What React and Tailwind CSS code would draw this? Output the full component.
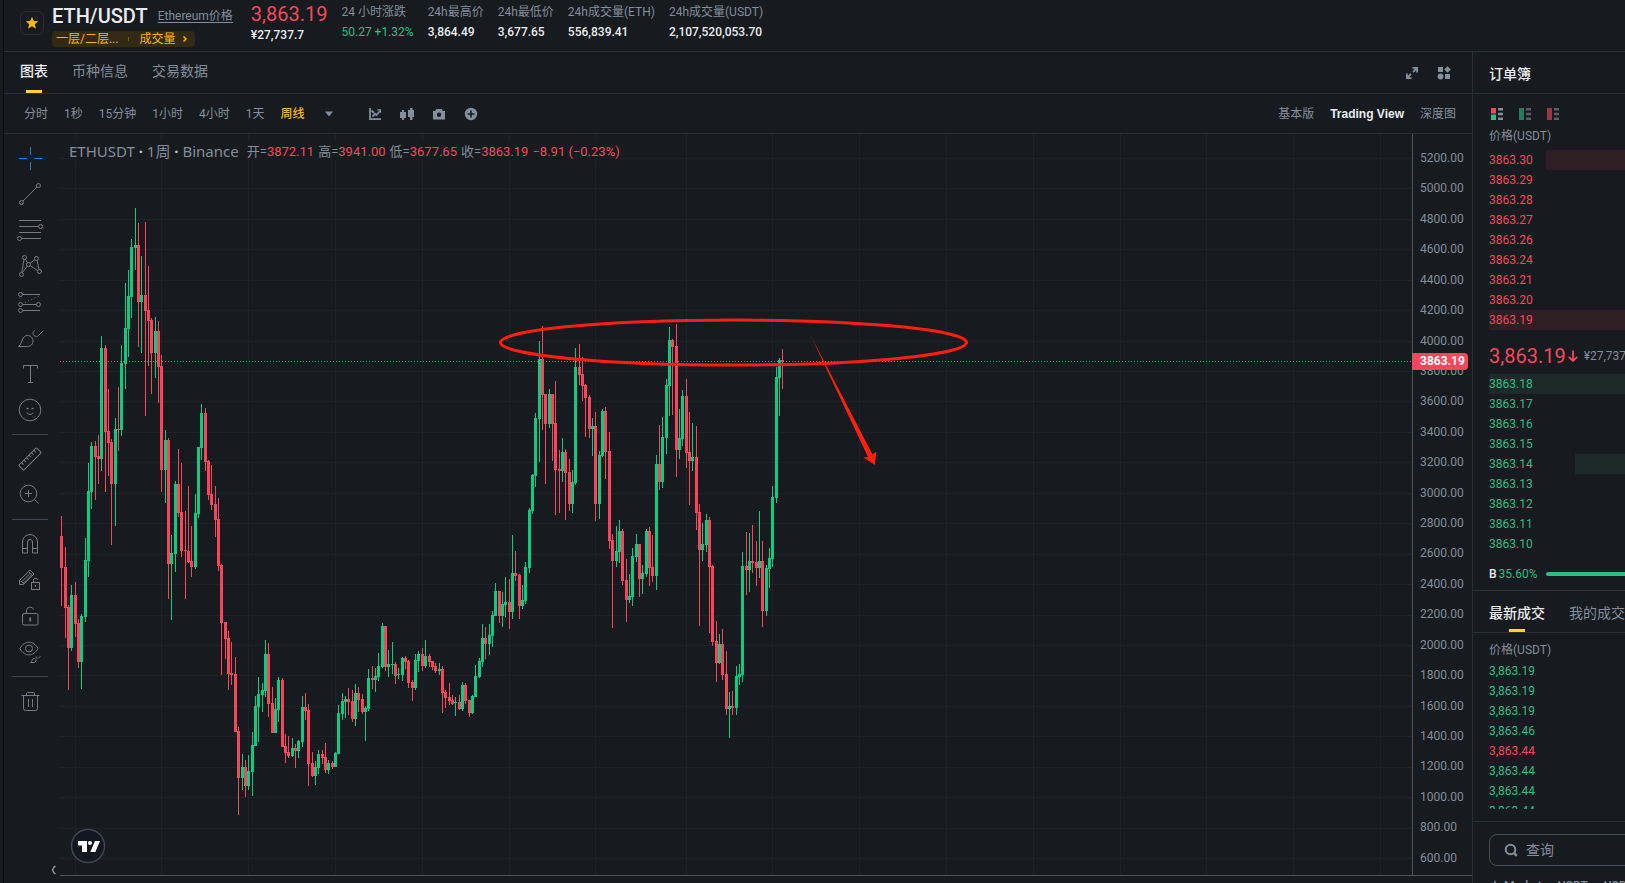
// src/App.jsx
import React, { useState } from 'react';

const STATS = [
  { label: '24 小时涨跌', value: '50.27 +1.32%', up: true },
  { label: '24h最高价', value: '3,864.49' },
  { label: '24h最低价', value: '3,677.65' },
  { label: '24h成交量(ETH)', value: '556,839.41' },
  { label: '24h成交量(USDT)', value: '2,107,520,053.70' },
];

const TABS = ['图表', '币种信息', '交易数据'];
const INTERVALS = ['分时', '1秒', '15分钟', '1小时', '4小时', '1天', '周线'];
const VIEWS = ['基本版', 'Trading View', '深度图'];

const ASKS = ['3863.30', '3863.29', '3863.28', '3863.27', '3863.26', '3863.24', '3863.21', '3863.20', '3863.19'];
const BIDS = ['3863.18', '3863.17', '3863.16', '3863.15', '3863.14', '3863.13', '3863.12', '3863.11', '3863.10'];
// share of the row that is filled, in percent
const DEPTH = { '3863.30': 58, '3863.19': 100, '3863.18': 100, '3863.14': 37 };

const TRADES = [
  ['3,863.19', 'up'],
  ['3,863.19', 'up'],
  ['3,863.19', 'up'],
  ['3,863.46', 'up'],
  ['3,863.44', 'down'],
  ['3,863.44', 'up'],
  ['3,863.44', 'up'],
  ['3,863.44', 'up'],
];

const PRICES = Array.from({ length: 24 }, (_, i) => (5200 - i * 200).toFixed(2));
const GRID_X = [75, 161, 248, 335, 422, 509, 595, 686, 772, 859, 946, 1033, 1120, 1206, 1293, 1380];

// x, high, body top, body bottom, low, u(p) / d(own)
const CANDLES = `
61 516 536 568 606 d|65 547 567 608 638 d|68 605 607 648 690 d|71 585 595 648 651 u|75 582 595 624 637 d
78 619 623 662 668 d|81 614 616 662 689 u|85 538 560 617 622 u|88 463 491 561 577 u|91 442 446 492 509 u
95 441 446 457 500 d|98 435 456 459 484 d|101 336 348 459 471 u|105 345 348 432 492 d|108 389 431 443 476 d
111 439 442 484 545 d|115 418 429 484 526 u|118 387 429 430 451 d|121 345 363 430 436 u|125 283 328 364 389 u
128 270 296 329 357 u|131 239 247 297 318 u|135 208 245 248 270 u|138 223 245 302 347 d|141 256 295 302 353 u
145 222 295 311 416 d|148 266 310 321 366 d|151 318 320 353 394 d|155 317 331 353 378 u|158 321 331 367 403 d
161 355 366 470 492 d|165 430 440 470 503 u|168 438 440 564 599 d|171 535 553 564 620 u|175 481 484 554 572 u
178 449 484 513 517 d|181 463 512 551 557 d|185 511 550 551 599 d|188 486 551 562 563 d|191 526 561 567 577 d
195 494 513 567 569 u|198 447 447 514 518 u|201 404 413 448 460 u|205 408 413 462 471 d|208 460 461 495 500 d
211 465 494 505 510 d|215 486 504 520 537 d|218 498 519 566 571 d|221 564 565 623 675 d|225 622 622 639 659 d
228 631 638 674 690 d|231 642 673 675 685 d|235 657 674 732 732 d|238 727 731 778 815 d|242 754 767 778 790 u
245 760 767 786 797 d|248 755 771 786 790 u|252 732 745 772 796 u|255 696 706 746 746 u|258 677 694 707 742 u
262 683 690 695 712 u|265 640 654 691 697 u|268 643 654 704 717 d|272 687 703 733 733 d|275 698 709 733 733 u
278 677 680 710 722 u|282 678 680 747 747 d|285 734 746 753 763 d|288 736 752 756 758 d|292 738 748 756 757 u
295 744 748 751 768 d|298 740 741 751 758 u|302 696 707 742 747 u|305 693 707 711 720 d|308 704 710 764 786 d
312 752 763 776 777 d|315 761 767 776 785 u|318 750 754 768 774 u|322 750 754 758 764 d|325 743 757 770 773 d
328 760 763 770 774 u|332 761 763 767 769 d|335 752 753 767 767 u|338 705 713 754 754 u|342 693 701 714 720 u
345 696 699 702 718 u|348 688 699 702 715 d|352 690 701 719 722 d|355 684 693 719 726 u|358 687 693 700 712 d
362 694 699 712 714 d|365 706 708 712 741 u|368 669 678 709 711 u|372 666 678 680 689 d|375 668 676 680 692 u
378 653 666 677 681 u|382 623 626 667 668 u|385 626 626 667 671 d|388 650 664 667 677 u|392 642 664 665 674 u
395 662 664 676 684 d|398 668 674 675 679 u|402 657 658 675 681 u|405 656 658 662 669 d|408 660 661 683 688 d
412 680 682 688 701 d|415 654 660 688 690 u|418 651 654 661 672 u|422 648 654 666 671 d|425 640 656 666 668 u
429 654 656 662 667 d|432 661 661 667 670 d|435 663 666 671 673 d|439 663 669 671 675 u|442 666 669 693 713 d
445 690 692 698 708 d|449 683 697 701 705 d|452 695 700 704 705 d|455 697 702 703 716 u|459 695 702 709 710 d
462 682 685 709 711 u|465 683 685 701 704 d|469 700 700 713 717 d|472 695 696 713 714 u|475 665 676 697 697 u
479 658 661 677 678 u|482 624 638 662 667 u|485 627 638 644 659 d|489 624 635 644 655 u|492 611 615 636 647 u
495 583 591 616 616 u|499 591 591 616 623 d|502 592 604 616 627 u|505 577 602 605 617 u|509 579 602 612 629 d
512 535 573 612 619 u|515 551 573 576 581 d|519 574 575 606 619 d|522 585 600 606 609 u|525 562 567 601 604 u
529 508 510 568 573 u|532 474 475 511 514 u|535 413 418 476 487 u|539 341 359 419 462 u|542 326 359 395 430 d
545 394 394 424 484 d|549 389 394 424 428 u|552 394 394 424 461 d|555 381 423 470 515 d|559 450 469 471 513 d
562 438 452 471 482 u|565 449 452 473 520 d|569 459 472 504 511 d|572 470 482 504 513 u|575 348 367 483 485 u
579 344 367 375 385 d|582 357 374 386 401 d|585 384 385 398 437 d|589 395 397 429 438 d|592 418 426 429 456 u
595 412 426 504 521 d|599 451 455 504 519 u|602 409 411 456 457 u|605 407 411 452 479 d|609 432 451 541 549 d
612 534 540 561 628 d|616 526 551 561 567 u|619 520 531 552 563 u|622 529 531 581 585 d|626 559 580 600 622 d
629 574 596 600 603 u|632 548 556 597 606 u|636 534 544 557 562 u|639 544 544 579 597 d|642 565 573 579 594 u
646 529 531 574 577 u|649 527 531 568 586 d|652 535 567 576 582 d|656 455 464 576 590 u|659 425 464 482 490 d
662 417 437 482 488 u|666 379 385 438 454 u|669 327 340 386 416 u|672 339 340 347 415 d|676 324 346 450 477 d
679 409 438 450 459 u|682 390 396 439 446 u|686 379 396 453 468 d|689 412 452 461 505 d|692 423 457 461 471 u
696 426 457 513 530 d|699 504 512 550 626 d|702 523 544 550 561 u|706 514 520 545 552 u|709 517 520 567 633 d
712 565 566 642 646 d|716 621 641 663 682 d|719 634 644 663 664 u|722 629 644 675 680 d|726 651 674 709 715 d
729 692 706 709 738 u|732 691 706 708 715 d|736 666 676 708 715 u|739 664 674 677 685 u|742 552 566 675 682 u
746 532 566 570 595 d|749 533 561 570 592 u|752 525 561 563 573 d|756 541 562 568 586 d|759 511 561 568 578 u
762 541 561 611 627 d|766 565 568 611 616 u|769 548 558 569 588 u|772 486 497 559 567 u|776 367 377 498 503 u
779 358 360 378 416 u|782 349 360 362 389 d
`
  .trim()
  .split(/[|\n]/)
  .map((row) => {
    const [x, high, top, bottom, low, dir] = row.split(' ');
    return { x: +x, high: +high, top: +top, bottom: +bottom, low: +low, up: dir === 'u' };
  });

const Chart = () => (
  <svg className="absolute inset-0 w-full h-full" aria-label="ETHUSDT">
    <g transform="translate(-60 -134)" shapeRendering="crispEdges">
      {PRICES.map((p, i) => (
        <rect key={p} x="60" y={158 + Math.round((i * 700) / 23)} width="100%" height="1" fill="#1e2126" />
      ))}
      {GRID_X.map((x) => (
        <rect key={x} x={x} y="134" width="1" height="100%" fill="#1e2126" />
      ))}
      {CANDLES.map((c) => (
        <g key={c.x} fill={c.up ? '#0ecb81' : '#f6465d'}>
          <rect x={c.x} y={c.high} width="1" height={c.low - c.high} />
          <rect x={c.x - 1} y={c.top} width="3" height={c.bottom - c.top} />
        </g>
      ))}
    </g>
    <line
      x1="0"
      x2="100%"
      y1="227.5"
      y2="227.5"
      stroke="#f6465d"
      strokeDasharray="1 2"
      shapeRendering="crispEdges"
    />
    <g transform="translate(-60 -134)">
      <ellipse cx="733.5" cy="342.5" rx="233" ry="22.5" fill="none" stroke="#ff1e10" strokeWidth="3" />
      <path d="M811 336L872.5 454.5L876 451.5L875 465L863.5 457.5L868 457Z" fill="#ff1e10" />
    </g>
  </svg>
);

const TvLogo = () => (
  <svg className="w-9 h-9" viewBox="0 0 36 36">
    <circle cx="18" cy="18" r="16.5" fill="#131722" stroke="#434651" strokeWidth="1.5" />
    <path d="M8 13h9v11h-5v-6.500h-4z" fill="#fff" />
    <circle cx="20" cy="15" r="2" fill="#fff" />
    <path d="M25 13h5l-4.700 11h-5z" fill="#fff" />
  </svg>
);

const TOOLS = [
  [
    ['十字线', <path key="a" stroke="#1e80cc" d="M14.500 3v8M14.500 18v8M3 14.500h8M18 14.500h8" />],
    [
      '趋势线',
      <g key="a">
        <circle cx="5.5" cy="22.500" r="2" />
        <circle cx="22.500" cy="5.500" r="2" />
        <path d="M7 21L21 7" />
      </g>,
    ],
    [
      '斐波那契',
      <g key="a">
        <path d="M3 4.500h22M3 10.500h19.500M3 16.500h22M5.500 22.500h19.500" />
        <circle cx="24.500" cy="10.500" r="2" />
        <circle cx="3.500" cy="22.500" r="2" />
      </g>,
    ],
    [
      '形态',
      <g key="a">
        <path d="M8 7.500L5.800 20.500M9.400 7.200L11.500 11M14 11.200L19 7.500M21 8L23 17.500M14.200 13.500L21.500 18.500M11.300 14L6.500 20.500" />
        <circle cx="8.500" cy="5.500" r="2" />
        <circle cx="20.500" cy="6.500" r="2" />
        <circle cx="12.500" cy="12.500" r="2" />
        <circle cx="5.500" cy="22.500" r="2" />
        <circle cx="23.500" cy="19.500" r="2" />
      </g>,
    ],
    [
      '预测',
      <g key="a">
        <path d="M6.500 6.500H24M6.500 16.500H20.500M6.500 22.500H24" />
        <path d="M9 14.500L23 8" strokeDasharray="1 2.500" />
        <circle cx="4.500" cy="6.500" r="2" />
        <circle cx="4.500" cy="16.500" r="2" />
        <circle cx="22.500" cy="16.500" r="2" />
        <circle cx="4.500" cy="22.500" r="2" />
      </g>,
    ],
    [
      '画笔',
      <g key="a">
        <path d="M2.500 22.500C6 20 5.500 15 8.500 12.500C12 9.800 17 12.500 17 17C17 20.500 14.500 22.500 11.500 22.500Z" />
        <path d="M19 6.500C17 7.500 16 10 18 11.500C19.500 13 21.500 12.500 22.500 11.500L27.500 6.500" />
      </g>,
    ],
    ['文字', <path key="a" d="M7.500 8.500v-3h14v3M14.500 5.500v17M12 22.500h5" />],
    [
      '图标',
      <g key="a">
        <circle cx="14" cy="14" r="10.800" />
        <path d="M11 16.500c0 2.500 6 2.500 6 0" />
        <path d="M10.500 12.500h2M15.500 12.500h2" strokeWidth="1.500" />
      </g>,
    ],
  ],
  [
    [
      '测量',
      <g key="a" transform="rotate(-45 14 14)">
        <rect x="1.500" y="10.500" width="25" height="7" rx="1" />
        <path d="M5.500 10.500v3M9 10.500v3M12.500 10.500v3M16 10.500v3M19.500 10.500v3M23 10.500v3" />
      </g>,
    ],
    [
      '放大',
      <g key="a">
        <circle cx="12.500" cy="12.500" r="8.300" />
        <path d="M18.500 18.500L22.500 22.500M12.500 9v7M9 12.500h7" />
      </g>,
    ],
  ],
  [
    [
      '磁铁',
      <path key="a" d="M6.500 23V12a7.500 7.500 0 0 1 15 0v11h-5V12a2.500 2.500 0 0 0-5 0v11zM6.500 18.500h5M16.500 18.500h5" />,
    ],
    [
      '保持绘图模式',
      <g key="a">
        <path d="M3.500 18.500v-4L14 4l4 4L7.500 18.500zM5 15l3 3M12.500 5.500l4 4M6 15.500L14.500 7M7.500 17L16 8.500" />
        <rect x="15.500" y="16.500" width="8" height="7" />
        <path d="M17.500 16.500v-2a2 2 0 0 1 4-.5M19.500 19v2" />
      </g>,
    ],
    [
      '锁定',
      <g key="a">
        <rect x="6.500" y="11.500" width="15.500" height="11.500" rx="1.500" />
        <path d="M10.500 11.500V8.500a3.600 3.600 0 0 1 7-1" />
        <path d="M14.200 15.500v4" strokeWidth="1.800" />
      </g>,
    ],
    [
      '隐藏',
      <g key="a">
        <path d="M4 10.500C8.500 2 17.500 2 22 10.500C17.500 19 8.500 19 4 10.500Z" />
        <circle cx="13" cy="10.500" r="3.500" />
        <path d="M14.500 24.500c2-1 1-3.500 3.500-4c2 0 3 2.500.5 4zM20 18.500c0 2.500 2 2 4.500 0" />
      </g>,
    ],
  ],
  [
    [
      '删除',
      <path key="a" d="M5.500 8.500h18M7.500 8.500v13a2 2 0 0 0 2 2h10a2 2 0 0 0 2-2v-13M10.500 8.500v-2a1 1 0 0 1 1-1h6a1 1 0 0 1 1 1v2M12.500 12v8M16.500 12v8" />,
    ],
  ],
];

const DrawingTools = () => (
  <div className="flex flex-col items-center w-[52px] mr-1 pt-1.5 shrink-0">
    {TOOLS.map((group, i) => (
      <React.Fragment key={i}>
        {i > 0 && <div className="w-9 h-px my-1.5 bg-[#434651]" />}
        {group.map(([name, drawing]) => (
          <button key={name} type="button" aria-label={name} className="flex items-center justify-center w-9 h-9 shrink-0">
            <svg className="w-7 h-7" viewBox="0 0 28 28" fill="none" stroke="#787b86">
              {drawing}
            </svg>
          </button>
        ))}
      </React.Fragment>
    ))}
    <button type="button" aria-label="收起" className="mt-auto mb-2 self-end">
      <svg className="w-2 h-2.5" viewBox="0 0 8 10" fill="none" stroke="#9aa0aa" strokeWidth="1.300">
        <path d="M7.500 1.500H6.500L4.500 5L6.500 8.500H7.500" />
      </svg>
    </button>
  </div>
);

const Header = () => (
  <header className="flex items-start h-[52px] pl-4 gap-3.5 border-b border-[#2b2f36] whitespace-nowrap">
    <div className="flex gap-2 pr-1">
      <button
        type="button"
        aria-label="收藏"
        className="flex items-center justify-center w-6 h-6 mt-[11px] border border-[#2b2f36] rounded-md"
      >
        <svg className="w-3.5 h-3.5" viewBox="0 0 14 14" fill="#f0b90b">
          <path d="M7 .8l1.800 4.100 4.400.4-3.300 2.900 1 4.500L7 10.300l-3.900 2.400 1-4.500L.8 5.300l4.400-.4z" />
        </svg>
      </button>
      <div>
        <div className="flex items-center h-[31px] gap-2.5">
          <h1 className="text-xl font-medium text-[#eaecef]">ETH/USDT</h1>
          <a href="#price" className="text-xs text-[#848e9c] underline underline-offset-2">Ethereum价格</a>
        </div>
        <a href="#tags" className="flex items-center w-fit h-4 px-1 rounded bg-[#332a14] text-xs text-[#f0b90b]">
          <span>一层/二层...</span>
          <span className="w-px h-1 mx-2.5 bg-[#7a5c10]" />
          <span>成交量</span>
          <svg className="w-3 h-3 ml-1" viewBox="0 0 12 12" fill="none" stroke="#f0b90b" strokeWidth="1.500">
            <path d="M4.500 3.500L7 6L4.500 8.500" />
          </svg>
        </a>
      </div>
    </div>
    <div>
      <div className="text-xl leading-7 text-[#f6465d]">3,863.19</div>
      <div className="text-xs leading-3.5 font-medium text-[#eaecef]">¥27,737.7</div>
    </div>
    {STATS.map((s) => (
      <div key={s.label} className="pt-0.5">
        <div className="text-xs leading-5 text-[#848e9c]">{s.label}</div>
        <div className={`text-xs leading-5 ${s.up ? 'text-[#2ebd85]' : 'font-medium text-[#eaecef]'}`}>{s.value}</div>
      </div>
    ))}
  </header>
);

const TabBar = () => {
  const [active, setActive] = useState('图表');
  return (
    <nav className="flex items-center h-[42px] px-4 border-b border-[#2b2f36]">
      <div className="flex h-full gap-6">
        {TABS.map((t) => (
          <button
            key={t}
            type="button"
            onClick={() => setActive(t)}
            className={`relative pb-1 text-sm ${t === active ? 'font-medium text-[#eaecef]' : 'text-[#848e9c]'}`}
          >
            {t}
            {t === active && <span className="absolute bottom-0 left-1/2 w-4 h-[3px] -ml-2 bg-[#fcd535]" />}
          </button>
        ))}
      </div>
      <div className="flex gap-4 ml-auto mr-1">
        <button type="button" aria-label="全屏">
          <svg className="w-4 h-4" viewBox="0 0 16 16" fill="#848e9c">
            <path d="M8.500 2H14v5.500h-1.800V5.200L9.600 7.700 8.300 6.400l2.500-2.600H8.500zM7.500 14H2V8.500h1.800v2.300l2.600-2.500 1.300 1.300-2.500 2.600h2.300z" />
          </svg>
        </button>
        <button type="button" aria-label="布局">
          <svg className="w-4 h-4" viewBox="0 0 16 16" fill="#848e9c">
            <path d="M2 2h5v5H2zM9 9h5v5H9zM11.500 1.200l3.300 3.300-3.300 3.300-3.300-3.300z" />
            <circle cx="4.500" cy="11.500" r="2.900" />
          </svg>
        </button>
      </div>
    </nav>
  );
};

const IntervalBar = () => {
  const [interval, setInterval] = useState('周线');
  const [view, setView] = useState('Trading View');
  return (
    <div className="flex items-center h-10 pl-5 pr-4 text-xs border-b border-[#2b2f36] whitespace-nowrap">
      <div className="flex gap-4">
        {INTERVALS.map((it) => (
          <button
            key={it}
            type="button"
            onClick={() => setInterval(it)}
            className={it === interval ? 'font-medium text-[#f0b90b]' : 'text-[#848e9c]'}
          >
            {it}
          </button>
        ))}
      </div>
      <button type="button" aria-label="更多周期" className="ml-4 mr-[30px]">
        <svg className="w-4 h-4" viewBox="0 0 16 16" fill="#848e9c">
          <path d="M4 5.500h8L8 10.500z" />
        </svg>
      </button>
      <div className="flex gap-4">
        <button type="button" aria-label="指标">
          <svg className="w-4 h-4" viewBox="0 0 16 16" fill="none" stroke="#848e9c" strokeWidth="1.800">
            <path d="M3 2v11.200h11M5.500 10.500l2.500-2.500 1.500 1L13 5M4.500 4.500l2.500 2.500" />
            <path d="M10.500 3.800h3v3" strokeWidth="1.200" />
          </svg>
        </button>
        <button type="button" aria-label="K线样式">
          <svg className="w-4 h-4" viewBox="0 0 16 16" fill="#848e9c">
            <path d="M1 6h2V4h2v2h2v6H5v2H3v-2H1zM9 4h2V2h2.500v2H15v7h-1.500v3H11v-3H9z" />
          </svg>
        </button>
        <button type="button" aria-label="截图">
          <svg className="w-4 h-4" viewBox="0 0 16 16" fill="#848e9c" fillRule="evenodd">
            <path d="M5.500 3h5l1.500 2h2v8.500H2V5h2zM8 6.500a2.200 2.200 0 1 0 0 4.400 2.200 2.200 0 0 0 0-4.400z" />
          </svg>
        </button>
        <button type="button" aria-label="添加">
          <svg className="w-4 h-4" viewBox="0 0 16 16" fill="#848e9c">
            <circle cx="8" cy="8" r="6.200" />
            <path d="M8 4.500v7M4.500 8h7" stroke="#171a1e" strokeWidth="1.600" />
          </svg>
        </button>
      </div>
      <div className="flex gap-4 ml-auto">
        {VIEWS.map((v) => (
          <button
            key={v}
            type="button"
            onClick={() => setView(v)}
            className={v === view ? "font-['Liberation_Sans'] font-bold text-[#eaecef]" : 'text-[#848e9c]'}
          >
            {v}
          </button>
        ))}
      </div>
    </div>
  );
};

const Legend = () => (
  <div className="absolute top-[7px] left-[9px] flex items-center h-5 gap-2 bg-[#171a1e] text-[#848e9c] whitespace-nowrap">
    <span className="text-[15px] font-['Noto_Sans','Noto_Sans_CJK_SC',sans-serif]">
      ETHUSDT <b className="text-[#c4c8ce]">·</b> 1周 <b className="text-[#c4c8ce]">·</b> Binance
    </span>
    <span className="flex gap-1 pt-0.5 text-[13px]">
      {[['开', '3872.11'], ['高', '3941.00'], ['低', '3677.65'], ['收', '3863.19']].map(([k, v]) => (
        <span key={k}>
          {k}=<span className="text-[#f6465d]">{v}</span>
        </span>
      ))}
      <span className="text-[#f6465d]">−8.91 (−0.23%)</span>
    </span>
  </div>
);

const ChartPanel = () => (
  <div className="flex flex-1 min-h-0">
    <DrawingTools />
    <div className="flex flex-col flex-1 min-w-0">
      <div className="flex flex-1 min-h-0">
        <div className="relative flex-1 overflow-hidden">
          <Chart />
          <Legend />
          <a href="#tradingview" aria-label="TradingView" className="absolute bottom-[11px] left-2.5">
            <TvLogo />
          </a>
        </div>
        <div className="relative flex flex-col justify-between w-[60px] pt-3.5 pb-[7px] pl-[7px] border-l border-[#50535a] text-xs leading-5 text-[#848e9c]">
          {PRICES.map((p) => (
            <span key={p}>{p}</span>
          ))}
          <span className="absolute top-[219px] -left-px w-14 pl-2 leading-[17px] rounded-r-sm bg-[#f6465d] font-bold text-white">
            3863.19
          </span>
        </div>
      </div>
      <div className="h-2 border-t border-[#50535a]" />
    </div>
  </div>
);

const BookRow = ({ price, side }) => (
  <li className="relative h-5 leading-5">
    {DEPTH[price] && (
      <span
        className={`absolute inset-y-0 right-0 ${side === 'ask' ? 'bg-[#2f1e23]' : 'bg-[#1c2a2a]'}`}
        style={{ width: `${DEPTH[price]}%` }}
      />
    )}
    <span className={`relative ${side === 'ask' ? 'text-[#f6465d]' : 'text-[#2ebd85]'}`}>{price}</span>
  </li>
);

const BookIcon = ({ top, bottom, dim }) => (
  <svg className={`w-3 h-3 ${dim ? 'opacity-60' : ''}`} viewBox="0 0 12 12">
    <path d="M0 0h5v5.500H0z" fill={top} />
    <path d="M0 6.500h5V12H0z" fill={bottom} />
    {dim && <path d="M0 5h5v2H0z" fill={top} />}
    <path d="M7 0h5v2.500H7zM7 4.700h5v2.500H7zM7 9.500h5V12H7z" fill="#848e9c" />
  </svg>
);

const OrderBook = () => (
  <section className="h-[539px] pl-4 border-b border-[#2b2f36]">
    <h2 className="flex items-center h-[42px] -ml-4 pl-4 pt-0.5 border-b border-[#2b2f36] text-sm font-medium text-[#eaecef]">
      订单簿
    </h2>
    <div className="flex gap-4 pt-3.5 pl-0.5">
      <button type="button" aria-label="全部"><BookIcon top="#f6465d" bottom="#2ebd85" /></button>
      <button type="button" aria-label="买单"><BookIcon top="#2ebd85" bottom="#2ebd85" dim /></button>
      <button type="button" aria-label="卖单"><BookIcon top="#f6465d" bottom="#f6465d" dim /></button>
    </div>
    <div className="mt-1 h-[26px] leading-6 text-[#848e9c]">价格(USDT)</div>
    <ul>
      {ASKS.map((p) => (
        <BookRow key={p} price={p} side="ask" />
      ))}
    </ul>
    <div className="flex items-center h-11 pt-2">
      <span className="text-xl text-[#f6465d]">3,863.19</span>
      <svg className="w-3.5 h-3.5 mr-1 shrink-0" viewBox="0 0 14 14" fill="none" stroke="#f6465d" strokeWidth="1.800">
        <path d="M7 1.500v10M2.800 7.800L7 12l4.200-4.200" />
      </svg>
      <span className="text-[#848e9c]">¥27,737.7</span>
    </div>
    <ul>
      {BIDS.map((p) => (
        <BookRow key={p} price={p} side="bid" />
      ))}
    </ul>
    <div className="flex items-center h-10">
      <span className="font-medium text-[#eaecef]">B</span>
      <span className="ml-0.5 mr-2 text-[#2ebd85]">35.60%</span>
      <span className="flex-1 h-1 bg-[#2ebd85] rounded-l-sm" />
    </div>
  </section>
);

const Trades = () => (
  <section className="h-[231px] border-b border-[#2b2f36]">
    <div className="flex h-[42px] gap-6 pl-4 border-b border-[#2b2f36] text-sm">
      <button type="button" className="relative pt-0.5 font-medium text-[#eaecef]">
        最新成交
        <span className="absolute bottom-0 left-1/2 w-4 h-[3px] -ml-2 bg-[#fcd535]" />
      </button>
      <button type="button" className="pt-0.5 text-[#848e9c]">我的成交</button>
    </div>
    <div className="pl-4 pt-[7px] pb-px leading-5 text-[#848e9c]">价格(USDT)</div>
    <ul className="pl-4 h-[148px] overflow-hidden">
      {TRADES.map(([price, dir], i) => (
        <li key={i} className={`h-5 leading-5 ${dir === 'up' ? 'text-[#2ebd85]' : 'text-[#f6465d]'}`}>
          {price}
        </li>
      ))}
    </ul>
  </section>
);

const Markets = () => (
  <section className="pl-4 pt-3">
    <label className="flex items-center w-50 h-8 pl-3.5 gap-2 border border-[#474d57] rounded-lg">
      <svg className="w-3.5 h-3.5 shrink-0" viewBox="0 0 14 14" fill="none" stroke="#848e9c" strokeWidth="2">
        <circle cx="6.500" cy="6.500" r="4.800" />
        <path d="M9.500 9.500L12.800 12.800" strokeWidth="2.500" />
      </svg>
      <input
        type="text"
        aria-label="查询"
        placeholder="查询"
        className="w-24 text-sm bg-transparent outline-none placeholder:text-[#848e9c]"
      />
    </label>
    <div className="flex gap-4 pt-2.5 leading-5 font-medium text-[#848e9c]">
      <span>★ Market</span>
      <span>USDT</span>
      <span>USDⓈ</span>
    </div>
  </section>
);

const App = () => (
  <div className="flex flex-col h-screen overflow-hidden pl-[3px] bg-[#171a1e] font-[Roboto,'Noto_Sans_CJK_SC',sans-serif]">
    <div className="flex flex-col flex-1 min-h-0 border-l border-[#0b0c0f]">
      <Header />
      <div className="flex flex-1 min-h-0">
        <main className="flex flex-col flex-1 min-w-0">
          <TabBar />
          <IntervalBar />
          <ChartPanel />
        </main>
        <aside className="w-[153px] shrink-0 overflow-hidden border-l border-[#2b2f36] text-xs whitespace-nowrap">
          <OrderBook />
          <Trades />
          <Markets />
        </aside>
      </div>
    </div>
  </div>
);

export default App;
